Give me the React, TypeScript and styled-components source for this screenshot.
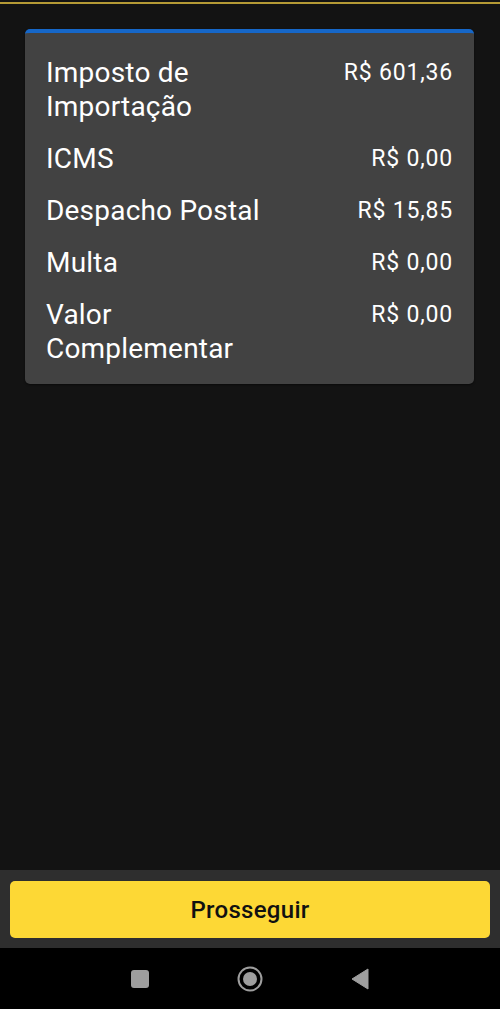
import styled, { createGlobalStyle } from 'styled-components'

const GlobalStyle = createGlobalStyle`
  html, body {
    margin: 0;
    padding: 0;
    background: #131313;
    font-family: Roboto, "Noto Sans", sans-serif;
  }
`

const Screen = styled.div`
  display: flex;
  flex-direction: column;
  height: 100vh;
  background: #131313;
`

const TopBar = styled.div`
  height: 2px;
  border-bottom: 2px solid #b59a35;
  background: #131313;
`

const Content = styled.main`
  flex: 1;
  padding: 25px 26px 0 25px;
`

const Card = styled.section`
  display: flex;
  flex-direction: column;
  gap: 18px;
  background: #424242;
  border-top: 4px solid #1667c8;
  border-radius: 5px;
  padding: 23px 21px 18px 21px;
  box-shadow: 0 1px 2px rgba(0, 0, 0, 0.5);
`

const Row = styled.div`
  display: flex;
  justify-content: space-between;
  align-items: flex-start;
  gap: 16px;
`

const Label = styled.span`
  color: #ffffff;
  font-size: 28px;
  letter-spacing: 0.2px;
  line-height: 34px;
  max-width: 232px;
`

const Value = styled.span`
  color: #ffffff;
  font-size: 23px;
  letter-spacing: 0.8px;
  line-height: 34px;
  white-space: nowrap;
`

const Footer = styled.footer`
  background: #2e2e2e;
  padding: 11px 10px 10px;
`

const Button = styled.button`
  width: 100%;
  height: 57px;
  border: none;
  border-radius: 5px;
  background: #fdd835;
  color: #111;
  font-family: Roboto, sans-serif;
  font-size: 24px;
  font-weight: 500;
  letter-spacing: 0.3px;
  cursor: pointer;
`

const NavBar = styled.nav`
  height: 61px;
  background: #000;
  display: flex;
  align-items: center;
  justify-content: center;
  gap: 88px;
`

const NavIcon = styled.svg`
  display: block;
`

const items = [
  { label: 'Imposto de Importação', value: 'R$ 601,36' },
  { label: 'ICMS', value: 'R$ 0,00' },
  { label: 'Despacho Postal', value: 'R$ 15,85' },
  { label: 'Multa', value: 'R$ 0,00' },
  { label: 'Valor Complementar', value: 'R$ 0,00' },
]

export default function App() {
  return (
    <>
      <GlobalStyle />
      <Screen>
        <TopBar />
        <Content>
          <Card>
            {items.map((item) => (
              <Row key={item.label}>
                <Label>{item.label}</Label>
                <Value>{item.value}</Value>
              </Row>
            ))}
          </Card>
        </Content>
        <Footer>
          <Button type="button">Prosseguir</Button>
        </Footer>
        <NavBar>
          <NavIcon width="18" height="18" viewBox="0 0 18 18">
            <rect x="0" y="0" width="18" height="18" rx="3" fill="#9e9e9e" />
          </NavIcon>
          <NavIcon width="26" height="26" viewBox="0 0 26 26">
            <circle cx="13" cy="13" r="11.5" fill="none" stroke="#9e9e9e" strokeWidth="2" />
            <circle cx="13" cy="13" r="7" fill="#9e9e9e" />
          </NavIcon>
          <NavIcon width="18" height="22" viewBox="0 0 18 22">
            <path d="M17 1 L1 11 L17 21 Z" fill="#9e9e9e" strokeLinejoin="round" stroke="#9e9e9e" strokeWidth="1" />
          </NavIcon>
        </NavBar>
      </Screen>
    </>
  )
}
